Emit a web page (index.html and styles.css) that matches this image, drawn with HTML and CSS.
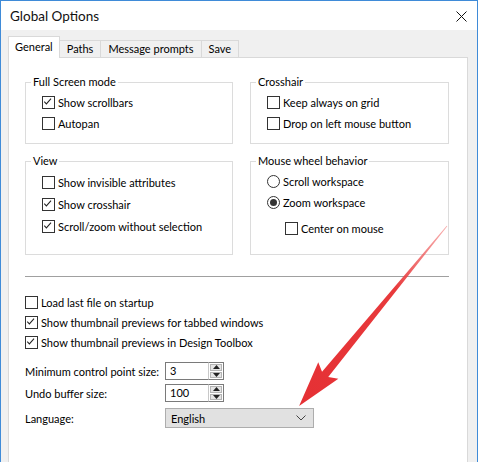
FILE: index.html
```html
<!DOCTYPE html>
<html lang="en">
<head>
  <meta charset="UTF-8" />
  <title>Global Options</title>
  <link rel="stylesheet" href="styles.css">
</head>
<body>
  <div class="window">
    <div class="titlebar">
      <span class="title">Global Options</span>
      <svg class="close" width="11" height="11" viewBox="0 0 11 11">
        <path d="M0.5 0.5 L10.5 10.5 M10.5 0.5 L0.5 10.5" stroke="#111" stroke-width="1" fill="none" />
      </svg>
    </div>

    <div class="tabs">
      <div class="tab active">General</div>
      <div class="tab">Paths</div>
      <div class="tab">Message prompts</div>
      <div class="tab">Save</div>
    </div>

    <div class="panel">
      <div class="groups">
        <fieldset class="group group-top">
          <legend>Full Screen mode</legend>
          <div class="group-body">
            <div class="row"><span class="check on"><svg viewBox="0 0 13 13"><path d="M2.5 6.5 L5 9.2 L10.5 3" /></svg></span>Show scrollbars</div>
            <div class="row"><span class="check"></span>Autopan</div>
          </div>
        </fieldset>

        <fieldset class="group group-top">
          <legend>Crosshair</legend>
          <div class="group-body">
            <div class="row"><span class="check"></span>Keep always on grid</div>
            <div class="row"><span class="check"></span>Drop on left mouse button</div>
          </div>
        </fieldset>

        <fieldset class="group group-bottom">
          <legend>View</legend>
          <div class="group-body">
            <div class="row tall"><span class="check"></span>Show invisible attributes</div>
            <div class="row tall"><span class="check on"><svg viewBox="0 0 13 13"><path d="M2.5 6.5 L5 9.2 L10.5 3" /></svg></span>Show crosshair</div>
            <div class="row tall"><span class="check on"><svg viewBox="0 0 13 13"><path d="M2.5 6.5 L5 9.2 L10.5 3" /></svg></span>Scroll/zoom without selection</div>
          </div>
        </fieldset>

        <fieldset class="group group-bottom">
          <legend>Mouse wheel behavior</legend>
          <div class="group-body">
            <div class="row"><span class="radio"></span>Scroll workspace</div>
            <div class="row"><span class="radio on"></span>Zoom workspace</div>
            <div class="row tall sub"><span class="check"></span>Center on mouse</div>
          </div>
        </fieldset>
      </div>

      <div class="separator"></div>

      <div class="options">
        <div class="row short"><span class="check"></span>Load last file on startup</div>
        <div class="row short"><span class="check on"><svg viewBox="0 0 13 13"><path d="M2.5 6.5 L5 9.2 L10.5 3" /></svg></span>Show thumbnail previews for tabbed windows</div>
        <div class="row short"><span class="check on"><svg viewBox="0 0 13 13"><path d="M2.5 6.5 L5 9.2 L10.5 3" /></svg></span>Show thumbnail previews in Design Toolbox</div>
      </div>

      <div class="form">
        <div class="field">
          <span class="field-label">Minimum control point size:</span>
          <div class="spin">
            <span class="spin-value">3</span>
            <div class="spin-buttons">
              <span class="spin-btn"><svg width="7" height="4" viewBox="0 0 7 4"><path d="M3.5 0 L7 4 L0 4 Z" /></svg></span>
              <span class="spin-btn"><svg width="7" height="4" viewBox="0 0 7 4"><path d="M0 0 L7 0 L3.5 4 Z" /></svg></span>
            </div>
          </div>
        </div>
        <div class="field">
          <span class="field-label">Undo buffer size:</span>
          <div class="spin">
            <span class="spin-value">100</span>
            <div class="spin-buttons">
              <span class="spin-btn"><svg width="7" height="4" viewBox="0 0 7 4"><path d="M3.5 0 L7 4 L0 4 Z" /></svg></span>
              <span class="spin-btn"><svg width="7" height="4" viewBox="0 0 7 4"><path d="M0 0 L7 0 L3.5 4 Z" /></svg></span>
            </div>
          </div>
        </div>
        <div class="field field-combo">
          <span class="field-label">Language:</span>
          <div class="combo">
            <span>English</span>
            <svg width="10" height="6" viewBox="0 0 10 6"><path d="M0.5 0.5 L5 5 L9.5 0.5" stroke="#444" fill="none" /></svg>
          </div>
        </div>
      </div>
    </div>

    <!-- red pointer drawn on top of the dialog -->
    <svg class="pointer" width="478" height="462" viewBox="0 0 478 462">
      <defs>
        <linearGradient id="shaft" x1="0" y1="0" x2="1" y2="0">
          <stop offset="0" stop-color="#f06060" stop-opacity="0.5" />
          <stop offset="0.35" stop-color="#e83a3c" />
          <stop offset="1" stop-color="#e53034" />
        </linearGradient>
      </defs>
      <g transform="translate(447 226) rotate(129.4)">
        <path d="M0 -0.4 L192 -4 L187 -13 L233 0 L187 13 L192 4 L0 0.4 Z" fill="url(#shaft)" />
      </g>
    </svg>
  </div>
</body>
</html>
```

FILE: styles.css
```css
body {
  margin: 0;
  font-family: Lato, "Noto Sans", sans-serif;
  font-size: 11px;
  color: #000;
  background: #fff;
}

.window {
  position: relative;
  width: 478px;
  height: 462px;
  box-sizing: border-box;
  border: 1px solid #3f8bd8;
  border-bottom: none;
  background: #f0f0f0;
  overflow: hidden;
}

.titlebar {
  height: 29px;
  background: #fff;
  display: flex;
  align-items: center;
  justify-content: space-between;
  padding: 0 10px 0 9px;
}

.title {
  font-size: 13.5px;
  color: #111;
}

.close {
  margin-top: 1px;
}

/* tab strip */
.tabs {
  display: flex;
  align-items: flex-end;
  height: 20px;
  padding: 7px 0 0 7px;
}

.tab {
  height: 16px;
  line-height: 16px;
  padding: 0 7px;
  border: 1px solid #d9d9d9;
  border-bottom: none;
  border-left: none;
  background: #f0f0f0;
  white-space: nowrap;
}

.tab.active {
  position: relative;
  z-index: 1;
  height: 21px;
  line-height: 19px;
  margin-bottom: -1px;
  padding: 0 6px;
  border-left: 1px solid #d9d9d9;
  background: #fff;
}

.panel {
  width: 460px;
  height: 420px;
  box-sizing: border-box;
  margin-left: 7px;
  padding: 17px 0 0 16px;
  background: #fff;
  border: 1px solid #d9d9d9;
}

/* group boxes */
.groups {
  display: grid;
  grid-template-columns: 208px 199px;
  column-gap: 17px;
  row-gap: 10px;
}

.group {
  margin: 0;
  padding: 0;
  border: 1px solid #dcdcdc;
  box-sizing: border-box;
  min-width: 0;
}

.group-top {
  height: 69px;
}

.group-bottom {
  height: 101px;
}

.group legend {
  margin-left: 5px;
  padding: 0 2px;
  line-height: 14px;
}

.group-body {
  padding: 3px 0 0 16px;
}

.row {
  display: flex;
  align-items: center;
  gap: 3px;
  height: 21px;
  white-space: nowrap;
}

.row.tall {
  height: 22px;
}

.row.short {
  height: 20px;
}

.row.sub {
  margin-top: 4px;
  padding-left: 18px;
}

.check {
  width: 13px;
  height: 13px;
  box-sizing: border-box;
  border: 1px solid #333;
  background: #fff;
  flex-shrink: 0;
  display: flex;
}

.check svg {
  width: 11px;
  height: 11px;
}

.check svg path {
  fill: none;
  stroke: #222;
  stroke-width: 1.2;
  transform: translate(-1px, -1px);
}

.radio {
  width: 13px;
  height: 13px;
  box-sizing: border-box;
  border: 1px solid #333;
  border-radius: 50%;
  background: #fff;
  flex-shrink: 0;
  display: flex;
  align-items: center;
  justify-content: center;
}

.radio.on::after {
  content: "";
  width: 7px;
  height: 7px;
  border-radius: 50%;
  background: #333;
}

.separator {
  width: 424px;
  margin-top: 21px;
  border-top: 1px solid #a0a0a0;
}

.options {
  margin-top: 15px;
}

/* numeric fields and language combo */
.form {
  display: flex;
  flex-direction: column;
  gap: 4px;
  margin-top: 10px;
}

.field {
  display: flex;
  align-items: center;
  height: 18px;
}

.field-combo {
  height: 20px;
  margin-top: 2px;
}

.field-label {
  width: 140px;
  white-space: nowrap;
}

.spin {
  display: flex;
  height: 18px;
}

.spin-value {
  width: 43px;
  box-sizing: border-box;
  border: 1px solid #7a7a7a;
  border-right: none;
  padding: 0 0 0 4px;
  line-height: 16px;
}

.spin-buttons {
  display: flex;
  flex-direction: column;
  width: 16px;
  box-sizing: border-box;
  border: 1px solid #7a7a7a;
  border-left: 1px solid #c8c8c8;
  padding: 1px;
  gap: 1px;
  background: #fff;
}

.spin-btn {
  flex: 1;
  display: flex;
  align-items: center;
  justify-content: center;
  background: #e5e5e5;
  border: 1px solid #b4b4b4;
}

.spin-btn svg path {
  fill: #222;
}

.combo {
  width: 149px;
  height: 20px;
  box-sizing: border-box;
  display: flex;
  align-items: center;
  justify-content: space-between;
  padding: 0 7px 0 5px;
  background: #e1e1e1;
  border: 1px solid #adadad;
}

.pointer {
  position: absolute;
  left: -1px;
  top: -1px;
  pointer-events: none;
}
```
